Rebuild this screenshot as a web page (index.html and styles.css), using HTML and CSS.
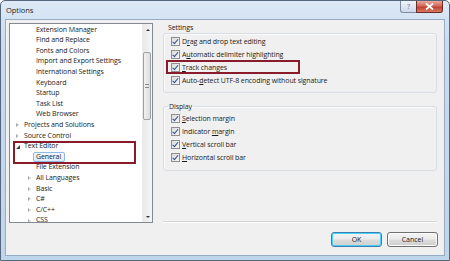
FILE: index.html
```html
<!DOCTYPE html>
<html>
<head>
<meta charset="utf-8">
<link rel="stylesheet" href="styles.css">
</head>
<body>
<div class="window">
  <div class="titlebar">
    <span class="title">Options</span>
    <div class="caption-btns">
      <span class="btn-help">?</span>
      <span class="btn-close"><svg width="9" height="7" viewBox="0 0 9 7"><path d="M1 0.5 L8 6.5 M8 0.5 L1 6.5" stroke="#fff" stroke-width="1.8" fill="none"/></svg></span>
    </div>
  </div>
  <div class="client">
    <div class="tree">
      <div class="tree-list">
        <div class="row l2"><span class="exp"></span><span class="lbl">Extension Manager</span></div>
        <div class="row l2"><span class="exp"></span><span class="lbl">Find and Replace</span></div>
        <div class="row l2"><span class="exp"></span><span class="lbl">Fonts and Colors</span></div>
        <div class="row l2"><span class="exp"></span><span class="lbl">Import and Export Settings</span></div>
        <div class="row l2"><span class="exp"></span><span class="lbl">International Settings</span></div>
        <div class="row l2"><span class="exp"></span><span class="lbl">Keyboard</span></div>
        <div class="row l2"><span class="exp"></span><span class="lbl">Startup</span></div>
        <div class="row l2"><span class="exp"></span><span class="lbl">Task List</span></div>
        <div class="row l2"><span class="exp"></span><span class="lbl">Web Browser</span></div>
        <div class="row l1"><span class="exp closed"></span><span class="lbl">Projects and Solutions</span></div>
        <div class="row l1"><span class="exp closed"></span><span class="lbl">Source Control</span></div>
        <div class="row l1"><span class="exp open"></span><span class="lbl">Text Editor</span></div>
        <div class="row l2"><span class="exp"></span><span class="lbl sel">General</span></div>
        <div class="row l2"><span class="exp"></span><span class="lbl">File Extension</span></div>
        <div class="row l2"><span class="exp closed"></span><span class="lbl">All Languages</span></div>
        <div class="row l2"><span class="exp closed"></span><span class="lbl">Basic</span></div>
        <div class="row l2"><span class="exp closed"></span><span class="lbl">C#</span></div>
        <div class="row l2"><span class="exp closed"></span><span class="lbl">C/C++</span></div>
        <div class="row l2"><span class="exp closed"></span><span class="lbl">CSS</span></div>
      </div>
      <div class="scrollbar">
        <div class="sb-btn"><span class="arr-up"></span></div>
        <div class="sb-track"><div class="thumb"><span class="grip"></span></div></div>
        <div class="sb-btn"><span class="arr-down"></span></div>
      </div>
      <div class="mark mark-tree"></div>
    </div>
    <div class="pane">
      <div class="group-label">Settings</div>
      <div class="group settings">
        <div class="cb-row"><span class="cb"></span><span>D<u>r</u>ag and drop text editing</span></div>
        <div class="cb-row"><span class="cb"></span><span>A<u>u</u>tomatic delimiter highlighting</span></div>
        <div class="cb-row"><span class="cb"></span><span><u>T</u>rack changes</span></div>
        <div class="cb-row"><span class="cb"></span><span>Auto-<u>d</u>etect UTF-8 encoding without signature</span></div>
        <div class="mark mark-track"></div>
      </div>
      <fieldset class="group display">
        <legend>Display</legend>
        <div class="cb-row"><span class="cb"></span><span><u>S</u>election margin</span></div>
        <div class="cb-row"><span class="cb"></span><span>Indicator <u>m</u>argin</span></div>
        <div class="cb-row"><span class="cb"></span><span><u>V</u>ertical scroll bar</span></div>
        <div class="cb-row"><span class="cb"></span><span><u>H</u>orizontal scroll bar</span></div>
      </fieldset>
      <div class="spacer"></div>
      <div class="sep"></div>
      <div class="buttons">
        <button class="btn default">OK</button>
        <button class="btn">Cancel</button>
      </div>
    </div>
  </div>
</div>
</body>
</html>
```
FILE: styles.css
```css
* { box-sizing: border-box; }
html, body { margin: 0; padding: 0; }
body {
  width: 450px;
  height: 261px;
  overflow: hidden;
  background: #ffffff;
  font-family: "Open Sans", "Noto Sans", sans-serif;
  font-size: 7px;
  letter-spacing: -0.1px;
  color: #1b1b1b;
}
.window {
  width: 450px;
  height: 261px;
  display: flex;
  flex-direction: column;
  background: linear-gradient(#dde9f6, #c9dcf0 40px, #bfd5ec);
  border: 1px solid #56677d;
  border-radius: 5px 5px 0 0;
  padding: 0 4px 4px;
}
.titlebar {
  height: 18px;
  display: flex;
  justify-content: space-between;
  align-items: flex-start;
}
.title {
  padding: 4px 0 0 1px;
  font-size: 7.6px;
  color: #1e1e1e;
}
.caption-btns {
  display: flex;
  margin-right: 2px;
}
.btn-help {
  width: 16px;
  height: 12px;
  border: 1px solid #7d8ca3;
  border-top: none;
  border-right: none;
  border-radius: 0 0 0 3px;
  background: linear-gradient(#eef3fa, #cdd9e8);
  color: #6a7a90;
  font-size: 7px;
  text-align: center;
  line-height: 11px;
}
.btn-close {
  width: 27px;
  height: 12px;
  border: 1px solid #6c2c28;
  border-top: none;
  border-radius: 0 0 3px 0;
  background: linear-gradient(#e9a99c, #d2695b 45%, #c2402f 55%, #d87a60);
  display: flex;
  align-items: center;
  justify-content: center;
}
.client {
  flex: 1;
  display: flex;
  background: #f0f0f0;
  border: 1px solid #98abc4;
  padding: 3px 7px 8px 3px;
}
.tree {
  position: relative;
  width: 144px;
  height: 200px;
  display: flex;
  background: #ffffff;
  border: 1px solid #838a93;
}
.tree-list {
  flex: 1;
  overflow: hidden;
  padding-top: 0.7px;
}
.row {
  height: 10.6px;
  line-height: 10.6px;
  display: flex;
  align-items: center;
  white-space: nowrap;
}
.row.l1 { padding-left: 5px; }
.row.l2 { padding-left: 17px; }
.exp {
  width: 8px;
  height: 10px;
  position: relative;
  flex: none;
}
.exp.closed::before {
  content: "";
  position: absolute;
  left: 1px;
  top: 3px;
  border-left: 3px solid #a6a6a6;
  border-top: 2.5px solid transparent;
  border-bottom: 2.5px solid transparent;
}
.exp.closed::after {
  content: "";
  position: absolute;
  left: 1.8px;
  top: 4.2px;
  border-left: 1.5px solid #ffffff;
  border-top: 1.3px solid transparent;
  border-bottom: 1.3px solid transparent;
}
.exp.open::before {
  content: "";
  position: absolute;
  left: 1px;
  top: 3px;
  border-right: 4px solid #404040;
  border-top: 4px solid transparent;
}
.lbl {
  padding: 0 1px;
}
.lbl.sel {
  margin-left: -2px;
  padding: 0 3px 0 2px;
  line-height: 8px;
  border: 1px solid #8fb8e6;
  border-radius: 2px;
  background: linear-gradient(#f4f9fe, #dcebfc);
}
.scrollbar {
  width: 10px;
  flex: none;
  display: flex;
  flex-direction: column;
  background: linear-gradient(90deg, #e9e9e9, #f5f5f5);
  border-left: 1px solid #ededed;
}
.sb-btn {
  height: 11px;
  display: flex;
  align-items: center;
  justify-content: center;
}
.arr-up {
  border-bottom: 2.5px solid #333;
  border-left: 2.5px solid transparent;
  border-right: 2.5px solid transparent;
}
.arr-down {
  border-top: 2.5px solid #333;
  border-left: 2.5px solid transparent;
  border-right: 2.5px solid transparent;
}
.sb-track {
  flex: 1;
  padding-top: 17px;
}
.thumb {
  width: 8px;
  height: 68px;
  border: 1px solid #a0a0a0;
  border-radius: 2px;
  background: linear-gradient(90deg, #f2f2f2, #dcdcdc);
  display: flex;
  align-items: center;
  justify-content: center;
}
.grip {
  width: 4px;
  height: 4px;
  border-top: 1px solid #8a8a8a;
  border-bottom: 1px solid #8a8a8a;
  background: linear-gradient(transparent 40%, #8a8a8a 40%, #8a8a8a 60%, transparent 60%);
}
.mark {
  position: absolute;
  border: 2px solid #8a1b2b;
  pointer-events: none;
}
.mark-tree {
  left: 3px;
  top: 117px;
  width: 123px;
  height: 23px;
}
.pane {
  flex: 1;
  margin-left: 10px;
  display: flex;
  flex-direction: column;
}
.group-label {
  height: 10px;
  line-height: 9px;
  padding-left: 5px;
}
.group {
  position: relative;
  border: 1px solid #d8dee4;
  border-radius: 3px;
  box-shadow: inset 1px 1px 0 #fafafa;
}
.settings {
  padding: 1px 0 5px 7px;
}
fieldset.display {
  margin: 9px 0 0;
  padding: 1px 0 6px 7px;
  min-width: 0;
}
fieldset.display legend {
  padding: 0 1px;
  margin-left: -3px;
  line-height: 9px;
}
.cb-row {
  height: 13px;
  display: flex;
  align-items: center;
  gap: 2px;
  white-space: nowrap;
}
.cb-row u { text-decoration-thickness: 0.6px; text-underline-offset: 1px; }
.cb {
  width: 9px;
  height: 9px;
  border: 1px solid #8f8f8f;
  background: linear-gradient(135deg, #dcdcdc, #f6f6f6);
  position: relative;
  flex: none;
}
.cb::after {
  content: "";
  position: absolute;
  left: 2.3px;
  top: 0.3px;
  width: 2px;
  height: 4.6px;
  border-right: 1.4px solid #2f4d8f;
  border-bottom: 1.4px solid #2f4d8f;
  transform: rotate(40deg);
}
.mark-track {
  left: 2px;
  top: 26px;
  width: 134px;
  height: 14px;
}
.spacer { flex: 1; }
.sep {
  height: 2px;
  border-top: 1px solid #d5d5d5;
  border-bottom: 1px solid #ffffff;
}
.buttons {
  margin-top: 9px;
  display: flex;
  justify-content: flex-end;
  gap: 5px;
  margin-right: -1px;
}
.btn {
  width: 51px;
  height: 15px;
  padding: 0;
  font: inherit;
  color: #1b1b1b;
  border: 1px solid #707070;
  border-radius: 3px;
  background: linear-gradient(#f3f3f3, #ebebeb 48%, #dddddd 52%, #cfcfcf);
  box-shadow: inset 0 0 0 1px #fcfcfc;
}
.btn.default {
  border-color: #3c7fb1;
  box-shadow: inset 0 0 0 1px #48d1f7;
}
```
